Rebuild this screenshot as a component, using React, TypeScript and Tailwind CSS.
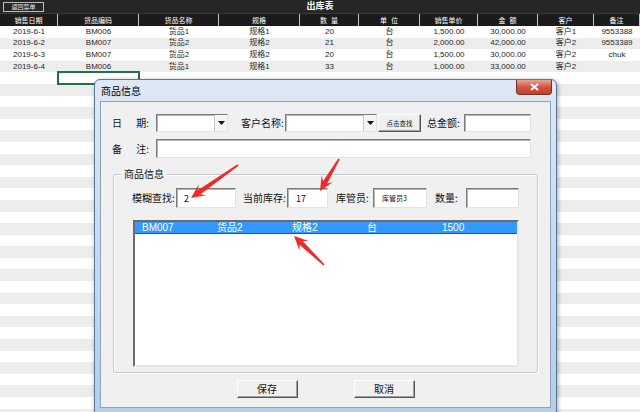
import React from "react";

const cols = [58, 81, 80, 81, 59, 61, 58, 60, 56, 46];
const heads = ["销售日期", "货品编码", "货品名称", "规格", "数  量", "单  位", "销售单价", "金  额", "客户", "备注"];
const data = [
  ["2019-6-1", "BM006", "货品1", "规格1", "20", "台", "1,500.00", "30,000.00", "客户1", "9553388"],
  ["2019-6-2", "BM007", "货品2", "规格2", "21", "台", "2,000.00", "42,000.00", "客户2", "9553389"],
  ["2019-6-3", "BM007", "货品2", "规格2", "20", "台", "1,500.00", "30,000.00", "客户2", "chuk"],
  ["2019-6-4", "BM006", "货品1", "规格1", "33", "台", "1,000.00", "33,000.00", "客户2", ""],
];

const arrows = [
  [238, 165, 191, 198],
  [339, 159, 320, 191],
  [324, 265, 294, 236],
];

function arrowPts(tx: number, ty: number, hx: number, hy: number) {
  const dx = hx - tx;
  const dy = hy - ty;
  const l = Math.sqrt(dx * dx + dy * dy);
  const ux = dx / l;
  const uy = dy / l;
  const nx = -uy;
  const ny = ux;
  const nX = hx - ux * 10;
  const nY = hy - uy * 10;
  const wX = hx - ux * 14;
  const wY = hy - uy * 14;
  const p = (x: number, y: number) => `${x.toFixed(1)},${y.toFixed(1)}`;
  return [
    p(tx + nx * 0.8, ty + ny * 0.8),
    p(nX + nx * 2.4, nY + ny * 2.4),
    p(wX + nx * 6.5, wY + ny * 6.5),
    p(hx, hy),
    p(wX - nx * 6.5, wY - ny * 6.5),
    p(nX - nx * 2.4, nY - ny * 2.4),
    p(tx - nx * 0.8, ty - ny * 0.8),
  ].join(" ");
}

const inputCls =
  "h-full bg-white border border-t-[#7a7a7a] border-l-[#7a7a7a] border-b-[#e3e3e3] border-r-[#e3e3e3] shadow-[inset_1px_1px_0_#b5b5b5]";

const Label = ({ a, b, w }: { a: string; b: string; w: string }) => (
  <div className={`${w} flex justify-between`}>
    <span>{a}</span>
    <span>{b}</span>
  </div>
);

const Combo = ({ w }: { w: string }) => (
  <div className={`${w} ${inputCls} flex justify-end`}>
    <div className="w-[13px] h-full border-l border-[#c8c8c8] bg-[#f4f4f4] flex items-center justify-center">
      <svg width="7" height="4" viewBox="0 0 7 4">
        <path d="M0 0H7L3.5 4Z" fill="#111" />
      </svg>
    </div>
  </div>
);

const Button = ({ w, h, children, cls }: { w: string; h: string; children: React.ReactNode; cls?: string }) => (
  <div
    className={`${w} ${h} ${cls ?? ""} flex items-center justify-center bg-[#f0f0f0] border border-t-white border-l-white border-b-[#555] border-r-[#555] shadow-[inset_-1px_-1px_0_#a0a0a0]`}
  >
    {children}
  </div>
);

const App = () => {
  const rows = Array.from({ length: 34 }, (_, i) => i);
  return (
    <div className="relative w-[640px] h-[412px] overflow-hidden bg-white font-['Liberation_Sans','Noto_Sans_CJK_SC',sans-serif]">
      {/* sheet */}
      <div className="h-[13px] bg-[#262626] flex items-center relative">
        <div className="ml-[3px] w-[41px] h-[10px] border border-[#bdbdbd] text-[#e6e6e6] text-[6px] leading-none flex items-center justify-center">
          返回菜单
        </div>
        <div className="flex-1 text-center text-white text-[9px] font-bold leading-none pr-[44px]">出库表</div>
      </div>
      <div className="h-[13px] bg-[#1b1b1b] flex border-t border-[#3c3c3c]">
        {heads.map((h, i) => (
          <div
            key={i}
            style={{ width: cols[i] }}
            className="h-full flex items-center justify-center text-white text-[7px] leading-none border-r border-[#c4c4c4] whitespace-pre"
          >
            {h}
          </div>
        ))}
      </div>
      {rows.map((r) => (
        <div key={r} className={`h-[11.6px] flex ${r % 2 === 1 ? "bg-[#ededed]" : "bg-white"}`}>
          {cols.map((w, c) => (
            <div
              key={c}
              style={{ width: w }}
              className={`h-full flex items-center justify-center text-[8px] leading-none text-[#262626] ${
                r === 4 && c === 1 ? "outline-2 outline-[#217346] -outline-offset-1" : ""
              }`}
            >
              {data[r] ? data[r][c] : ""}
            </div>
          ))}
        </div>
      ))}

      {/* dialog window */}
      <div className="absolute left-[94px] top-[79px] w-[463px] h-[334px] rounded-t-[6px] border border-[#5a7898] bg-gradient-to-b from-[#dfe8f3] via-[#c6daef] to-[#b4cfea] px-[5px] pb-[4px] shadow-[1px_1px_4px_rgba(0,0,0,0.35)] font-['Noto_Sans_CJK_SC',sans-serif]">
        <div className="h-[21px] flex items-center pl-[1px] text-[10px] text-black">商品信息</div>
        <div className="absolute right-[4px] top-0 w-[36px] h-[15px] rounded-b-[4px] border border-t-0 border-[#6e3329] bg-gradient-to-b from-[#e9a493] via-[#d2553f] to-[#c4402a] flex items-center justify-center">
          <svg width="9" height="8" viewBox="0 0 9 8">
            <path d="M1 1L8 7M8 1L1 7" stroke="white" strokeWidth="2" />
          </svg>
        </div>
        <div className="h-[307px] bg-[#f0f0f0] border border-[#8aa4c0] text-[10px] text-[#111] leading-none">
          <div className="mt-[12px] ml-[11px] h-[18px] flex items-center">
            <Label a="日" b="期:" w="w-[37px]" />
            <div className="w-[7px]" />
            <Combo w="w-[72px]" />
            <span className="ml-[13px] w-[44px]">客户名称:</span>
            <Combo w="w-[92px]" />
            <Button w="w-[43px]" h="h-[18px]" cls="ml-[1px] text-[6.5px]">
              点击查找
            </Button>
            <span className="ml-[6px] w-[37px]">总金额:</span>
            <div className={`w-[67px] ${inputCls}`} />
          </div>
          <div className="mt-[7px] ml-[11px] h-[19px] flex items-center">
            <Label a="备" b="注:" w="w-[37px]" />
            <div className="w-[7px]" />
            <div className={`w-[375px] ${inputCls}`} />
          </div>

          <div className="relative mt-[16px] ml-[12px] w-[425px] h-[199px] border border-[#c4c9cf] rounded-[3px] shadow-[inset_1px_1px_0_white,1px_1px_0_white] pl-[18px] pt-[13px]">
            <span className="absolute -top-[6px] left-[7px] px-[3px] bg-[#f0f0f0]">商品信息</span>
            <div className="h-[20px] flex items-center">
              <span className="w-[44px]">模糊查找:</span>
              <div className={`w-[60px] ${inputCls} flex items-center pl-[7px] text-[9px]`}>2</div>
              <span className="ml-[7px] w-[44px]">当前库存:</span>
              <div className={`w-[41px] ${inputCls} flex items-center pl-[8px] text-[9px]`}>17</div>
              <span className="ml-[8px] w-[37px]">库管员:</span>
              <div className={`w-[54px] ${inputCls} flex items-center pl-[8px] text-[7px]`}>库管员3</div>
              <span className="ml-[8px] w-[31px]">数量:</span>
              <div className={`w-[53px] ${inputCls}`} />
            </div>
            <div className="mt-[12px] ml-[1px] w-[386px] h-[147px] bg-white border-2 border-t-[#6b6b6b] border-l-[#6b6b6b] border-b-[#e6e6e6] border-r-[#e6e6e6]">
              <div className="h-[12px] bg-[#3399ff] border-b border-[#2b4f86] flex items-center pl-[7px] text-white text-[10px] font-['Liberation_Sans','Noto_Sans_CJK_SC',sans-serif]">
                {["BM007", "货品2", "规格2", "台", "1500"].map((t, i) => (
                  <span key={i} className="w-[77px]">
                    {t}
                  </span>
                ))}
              </div>
            </div>
          </div>

          <div className="mt-[7px] flex justify-center gap-[56px]">
            <Button w="w-[61px]" h="h-[18px]">
              保存
            </Button>
            <Button w="w-[61px]" h="h-[18px]">
              取消
            </Button>
          </div>
        </div>
      </div>

      {/* annotation arrows */}
      <svg className="absolute left-0 top-0 pointer-events-none" width="640" height="412">
        {arrows.map((a, i) => (
          <polygon key={i} points={arrowPts(a[0], a[1], a[2], a[3])} fill="#ec2b2b" />
        ))}
      </svg>
    </div>
  );
};

export default App;
